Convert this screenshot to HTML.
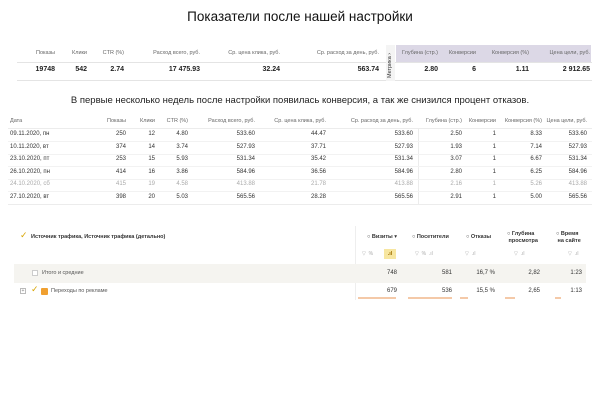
<!DOCTYPE html>
<html><head><meta charset="utf-8"><style>
*{margin:0;padding:0;box-sizing:border-box}
body{width:600px;height:400px;background:#fff;font-family:"Liberation Sans","DejaVu Sans",sans-serif;color:#222;position:relative;overflow:hidden}
.a{position:absolute;white-space:nowrap}
.r{text-align:right}
.h{font-size:5.5px;color:#666}
.v{font-size:7px;font-weight:bold;color:#222}
.t{font-size:6px;color:#333}
.g{color:#aaa}
</style></head><body>
<div class="a" style="left:0;width:600px;top:9px;text-align:center;font-size:13.5px;color:#111">Показатели после нашей настройки</div>

<div class="a" style="left:396px;top:45px;width:195px;height:17px;background:#dcd8e6"></div>
<div class="a" style="left:17px;top:62px;width:575px;height:1px;background:#e4e4e4"></div>
<div class="a" style="left:17px;top:80px;width:575px;height:1px;background:#e4e4e4"></div>
<div class="a" style="left:386px;top:45px;width:9px;height:36px;background:#f4f4f4"></div>
<div class="a" style="left:387px;top:78px;font-size:5.5px;color:#333;transform:rotate(-90deg);transform-origin:0 0">Метрика ›</div>

<div id="top"></div>

<div class="a" style="left:0;width:600px;top:95px;text-align:center;font-size:9.5px;color:#222">В первые несколько недель после настройки появилась конверсия, а так же снизился процент отказов.</div>

<div class="a" style="left:8px;top:128px;width:584px;height:1px;background:#ececec"></div>
<div class="a" style="left:8px;top:204px;width:584px;height:1px;background:#ececec"></div>
<div class="a" style="left:418px;top:128px;width:1px;height:76px;background:#ececec"></div>
<div id="mid"></div>

<div class="a" style="left:20px;top:230px;font-size:9px;color:#d8a400">✓</div>
<div class="a" style="left:31px;top:234px;font-size:5.5px;font-weight:bold;color:#333">Источник трафика, Источник трафика (детально)</div>
<div class="a" style="left:355px;top:226px;width:1px;height:74px;background:#eee"></div>
<div class="a" style="left:367px;top:234px;font-size:5.5px;font-weight:bold;color:#333">○ Визиты ▾</div>
<div class="a" style="left:412px;top:234px;font-size:5.5px;font-weight:bold;color:#333">○ Посетители</div>
<div class="a" style="left:466px;top:234px;font-size:5.5px;font-weight:bold;color:#333">○ Отказы</div>
<div class="a" style="left:507px;top:231px;font-size:5.5px;font-weight:bold;color:#333;line-height:7px">○ Глубина<br>&nbsp;просмотра</div>
<div class="a" style="left:556px;top:231px;font-size:5.5px;font-weight:bold;color:#333;line-height:7px">○ Время<br>&nbsp;на сайте</div>
<div class="a" style="left:362px;top:251px;font-size:5px;color:#aaa">▽ &nbsp;% </div>
<div class="a" style="left:384px;top:249px;width:12px;height:10px;background:#f7e6a0;font-size:5.5px;color:#a07000;text-align:center;line-height:10px;font-weight:bold">.ıl</div>
<div class="a" style="left:415px;top:251px;font-size:5px;color:#aaa">▽ &nbsp;% &nbsp;.ıl</div>
<div class="a" style="left:465px;top:251px;font-size:5px;color:#aaa">▽ &nbsp;.ıl</div>
<div class="a" style="left:514px;top:251px;font-size:5px;color:#aaa">▽ &nbsp;.ıl</div>
<div class="a" style="left:568px;top:251px;font-size:5px;color:#aaa">▽ &nbsp;.ıl</div>
<div class="a" style="left:14px;top:264px;width:572px;height:19px;background:#f5f4f0"></div>
<div class="a" style="left:32px;top:270px;width:6px;height:6px;border:1px solid #ccc;background:#fff"></div>
<div class="a" style="left:42px;top:270px;font-size:5.5px;color:#555">Итого и средние</div>
<div class="a" style="left:20px;top:288px;width:6px;height:6px;border:1px solid #bbb;font-size:5px;line-height:4px;text-align:center;color:#888">+</div>
<div class="a" style="left:31px;top:284px;font-size:9px;color:#d8a400">✓</div>
<div class="a" style="left:41px;top:288px;width:7px;height:7px;background:#f0a030;border-radius:1px"></div>
<div class="a" style="left:51px;top:288px;font-size:5.5px;color:#555">Переходы по рекламе</div>
<div class="a" style="left:358px;top:297px;width:38px;height:1.5px;background:#f4c9a8"></div>
<div class="a" style="left:408px;top:297px;width:44px;height:1.5px;background:#f4c9a8"></div>
<div class="a" style="left:460px;top:297px;width:8px;height:1.5px;background:#f4c9a8"></div>
<div class="a" style="left:505px;top:297px;width:10px;height:1.5px;background:#f4c9a8"></div>
<div class="a" style="left:555px;top:297px;width:6px;height:1.5px;background:#f4c9a8"></div>
<div id="bot"></div>

<script>
function put(id,html){document.getElementById(id).outerHTML=html}
var s='';
function cell(x,y,txt,cls,left){ if(left) return '<div class="a '+cls+'" style="left:'+x+'px;top:'+y+'px">'+txt+'</div>';
 return '<div class="a r '+cls+'" style="right:'+(600-x)+'px;top:'+y+'px">'+txt+'</div>';}
var tx=[55,87,124,200,280,379,438,476,529,590];
var th=['Показы','Клики','CTR (%)','Расход всего, руб.','Ср. цена клика, руб.','Ср. расход за день, руб.','Глубина (стр.)','Конверсии','Конверсия (%)','Цена цели, руб.'];
var tv=['19748','542','2.74','17 475.93','32.24','563.74','2.80','6','1.11','2 912.65'];
for(var i=0;i<10;i++){s+=cell(tx[i],50,th[i],'h');s+=cell(tx[i],66,tv[i],'v');}
put('top',s);
s='';
var mx=[126,155,188,255,326,413,462,496,542,587];
var mh=['Показы','Клики','CTR (%)','Расход всего, руб.','Ср. цена клика, руб.','Ср. расход за день, руб.','Глубина (стр.)','Конверсии','Конверсия (%)','Цена цели, руб.'];
s+=cell(10,118,'Дата','h',1);
for(var i=0;i<10;i++)s+=cell(mx[i],118,mh[i],'h');
var rows=[['09.11.2020, пн','250','12','4.80','533.60','44.47','533.60','2.50','1','8.33','533.60'],
['10.11.2020, вт','374','14','3.74','527.93','37.71','527.93','1.93','1','7.14','527.93'],
['23.10.2020, пт','253','15','5.93','531.34','35.42','531.34','3.07','1','6.67','531.34'],
['26.10.2020, пн','414','16','3.86','584.96','36.56','584.96','2.80','1','6.25','584.96'],
['24.10.2020, сб','415','19','4.58','413.88','21.78','413.88','2.16','1','5.26','413.88'],
['27.10.2020, вт','398','20','5.03','565.56','28.28','565.56','2.91','1','5.00','565.56']];
for(var r=0;r<6;r++){var y=131+r*12.6;var c='t'+(r==4?' g':'');
 s+=cell(10,y,rows[r][0],c,1);for(var i=0;i<10;i++)s+=cell(mx[i],y,rows[r][i+1],c);
 if(r<5)s+='<div class="a" style="left:8px;top:'+(y+10)+'px;width:584px;height:1px;background:#f2f2f2"></div>';}
put('mid',s);
s='';
var bx=[397,452,495,540,582];
var b1=['748','581','16,7 %','2,82','1:23'],b2=['679','536','15,5 %','2,65','1:13'];
for(var i=0;i<5;i++){s+=cell(bx[i],270,b1[i],'t');s+=cell(bx[i],288,b2[i],'t');}
put('bot',s);
</script>
</body></html>
